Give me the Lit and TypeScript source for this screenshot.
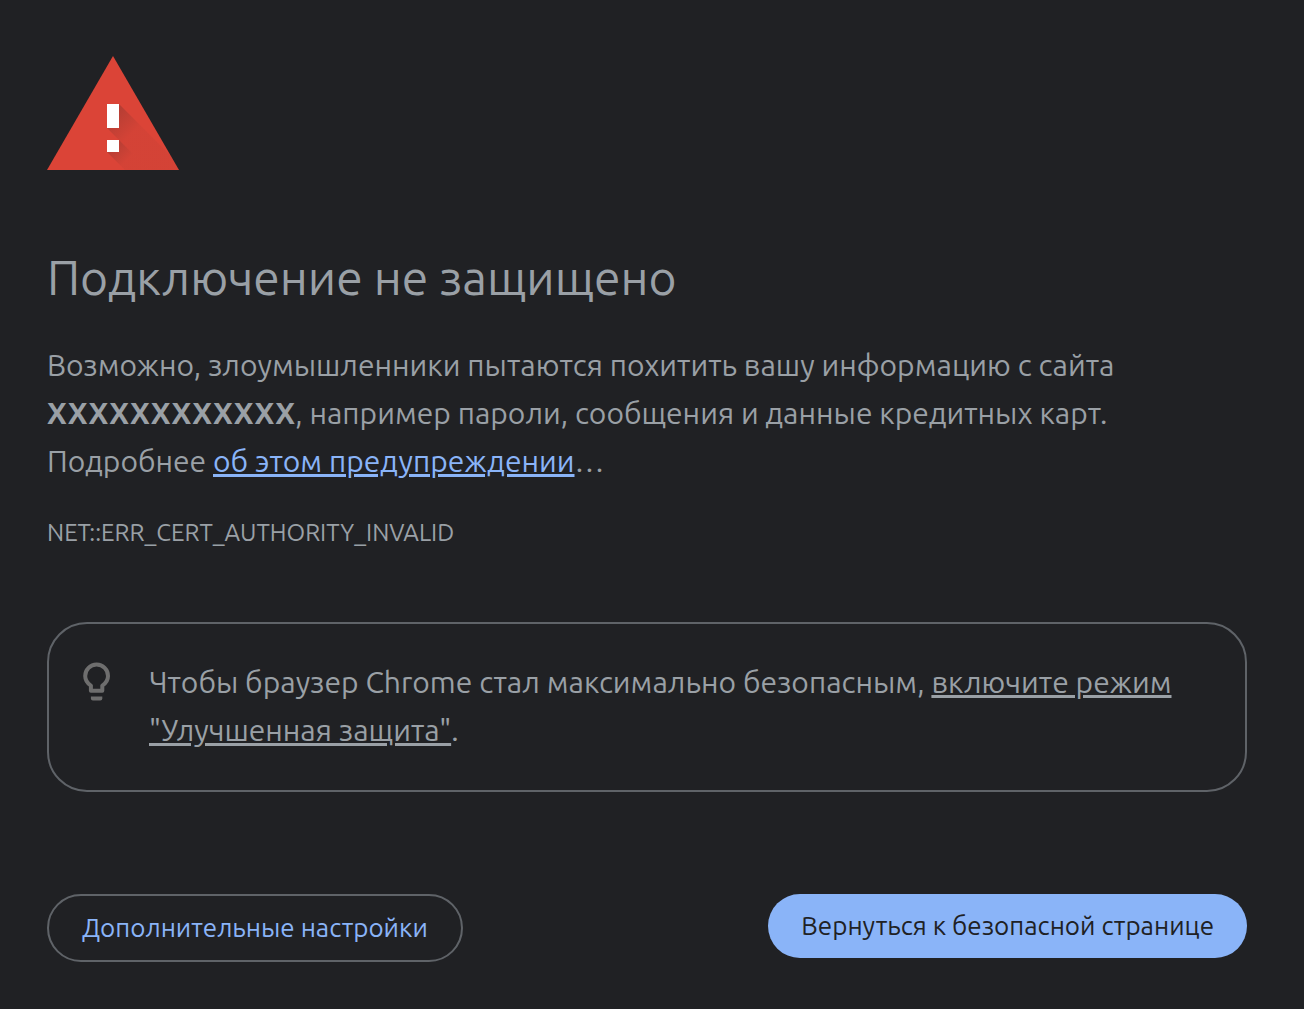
import { LitElement, css, html } from "lit";
import { customElement } from "lit/decorators.js";

@customElement("app-root")
export class AppRoot extends LitElement {
  static styles = css`
    :host {
      display: block;
      min-height: 100vh;
      box-sizing: border-box;
      padding: 56px 57px 47px 47px;
      background: #202124;
      color: #9aa0a6;
      font-family: Ubuntu, "Open Sans", "Noto Sans", sans-serif;
      font-size: 30px;
      line-height: 48px;
    }
    .warning {
      display: block;
      width: 132px;
      height: 114px;
      margin-bottom: 77px;
    }
    .title {
      margin: 0 0 34px;
      font-size: 48px;
      font-weight: 400;
      line-height: 60px;
    }
    .message {
      margin: 0;
    }
    .link {
      color: #8ab4f8;
    }
    .code {
      margin: 33px 0 74px;
      font-size: 24px;
      line-height: 30px;
    }
    .tip {
      display: flex;
      gap: 32px;
      padding: 34px 32px 36px;
      border: 2px solid #5f6368;
      border-radius: 40px;
    }
    .bulb {
      flex: none;
      width: 36px;
      height: 48px;
    }
    .tip-text {
      margin: 0;
    }
    .tip-link {
      color: inherit;
    }
    .actions {
      display: flex;
      flex-wrap: wrap;
      justify-content: space-between;
      align-items: flex-start;
      gap: 16px;
      margin-top: 102px;
    }
    .button {
      box-sizing: content-box;
      padding: 16px 33px;
      border: 0;
      border-radius: 34px;
      background: #8ab4f8;
      color: #202124;
      font: inherit;
      font-size: 26px;
      line-height: 32px;
      cursor: pointer;
    }
    .secondary {
      border: 2px solid #5f6368;
      background: none;
      color: #8ab4f8;
    }
  `;

  render() {
    return html`
      <main>
        <svg class="warning" viewBox="0 0 132 114" aria-hidden="true">
          <defs>
            <linearGradient id="bar-shade" gradientUnits="userSpaceOnUse" x1="66" y1="60" x2="84" y2="78">
              <stop offset="0" stop-color="#262626" stop-opacity=".2" />
              <stop offset="1" stop-color="#262626" stop-opacity=".04" />
            </linearGradient>
            <linearGradient id="dot-shade" gradientUnits="userSpaceOnUse" x1="66" y1="90" x2="80" y2="104">
              <stop offset="0" stop-color="#262626" stop-opacity=".2" />
              <stop offset="1" stop-color="#262626" stop-opacity=".04" />
            </linearGradient>
            <clipPath id="triangle"><path d="M66 0 132 114H0Z" /></clipPath>
          </defs>
          <path fill="#db4437" d="M66 0 132 114H0Z" />
          <g clip-path="url(#triangle)">
            <path fill="url(#bar-shade)" d="M72 48 138 114H102L60 72H72Z" />
            <path fill="url(#dot-shade)" d="M72 84 102 114H78L60 96H72Z" />
          </g>
          <path fill="#fff" d="M60 48h12v24H60zM60 84h12v12H60z" />
        </svg>

        <h1 class="title">Подключение не защищено</h1>
        <p class="message">
          Возможно, злоумышленники пытаются похитить вашу информацию с сайта
          <strong>XXXXXXXXXXXX</strong>, например пароли, сообщения и данные кредитных карт.
          Подробнее <a class="link" href="#">об этом предупреждении</a>…
        </p>
        <p class="code">NET::ERR_CERT_AUTHORITY_INVALID</p>

        <section class="tip">
          <svg class="bulb" viewBox="0 0 36 48" aria-hidden="true">
            <path
              fill="none"
              stroke="#6e6e6e"
              stroke-width="4"
              stroke-linejoin="round"
              d="M9.900 32.800V27.600C6.300 25.200 4.200 22 4.200 18A11.400 11.400 0 0 1 27 18C27 22 24.900 25.200 21.300 27.600V32.800Z"
            />
            <path fill="#6e6e6e" d="M9.900 38.500h11.400v1.900q0 2-2 2h-7.400q-2 0-2-2z" />
          </svg>
          <p class="tip-text">
            Чтобы браузер Chrome стал максимально безопасным,
            <a class="tip-link" href="#">включите режим "Улучшенная защита"</a>.
          </p>
        </section>

        <div class="actions">
          <button class="button secondary" type="button">Дополнительные настройки</button>
          <button class="button" type="button">Вернуться к безопасной странице</button>
        </div>
      </main>
    `;
  }
}
